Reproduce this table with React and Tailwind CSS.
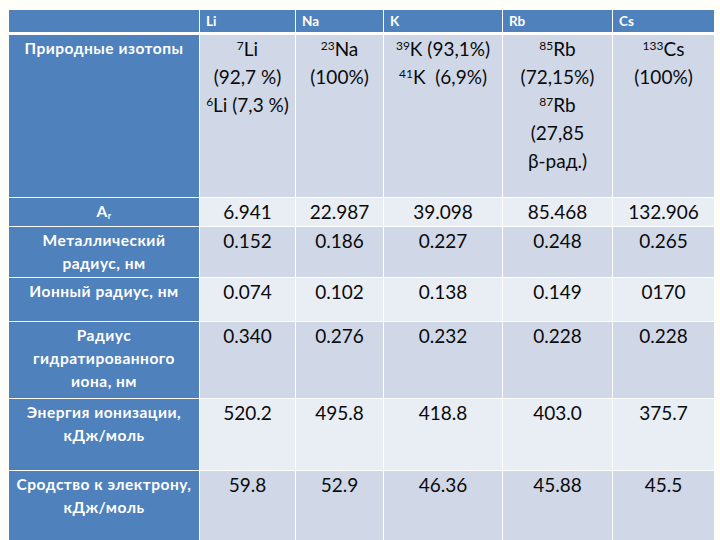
import React from "react";

const font = { fontFamily: "Lato, 'Noto Sans', 'Liberation Sans', sans-serif" };

const head = ["Li", "Na", "K", "Rb", "Cs"];

const rows = [
  {
    label: ["Природные изотопы"],
    dark: true,
    cells: [
      [<><sup className="text-[12px]">7</sup>Li</>, "(92,7 %)", <><sup className="text-[12px]">6</sup>Li (7,3 %)</>],
      [<><sup className="text-[12px]">23</sup>Na</>, "(100%)"],
      [<><sup className="text-[12px]">39</sup>K (93,1%)</>, <><sup className="text-[12px]">41</sup>K&nbsp; (6,9%)</>],
      [<><sup className="text-[12px]">85</sup>Rb</>, "(72,15%)", <><sup className="text-[12px]">87</sup>Rb</>, "(27,85", "β-рад.)"],
      [<><sup className="text-[12px]">133</sup>Cs</>, "(100%)"],
    ],
  },
  {
    label: [<>A<sub className="text-[9px]">r</sub></>],
    dark: false,
    cells: [["6.941"], ["22.987"], ["39.098"], ["85.468"], ["132.906"]],
  },
  {
    label: ["Металлический", "радиус, нм"],
    dark: true,
    cells: [["0.152"], ["0.186"], ["0.227"], ["0.248"], ["0.265"]],
  },
  {
    label: ["Ионный радиус, нм"],
    dark: false,
    cells: [["0.074"], ["0.102"], ["0.138"], ["0.149"], ["0170"]],
  },
  {
    label: ["Радиус", "гидратированного", "иона, нм"],
    dark: true,
    cells: [["0.340"], ["0.276"], ["0.232"], ["0.228"], ["0.228"]],
  },
  {
    label: ["Энергия ионизации,", "кДж/моль"],
    dark: false,
    cells: [["520.2"], ["495.8"], ["418.8"], ["403.0"], ["375.7"]],
  },
  {
    label: ["Сродство к электрону,", "кДж/моль"],
    dark: true,
    cells: [["59.8"], ["52.9"], ["46.36"], ["45.88"], ["45.5"]],
  },
];

export default function App() {
  return (
    <div className="w-[720px] h-[540px] overflow-hidden bg-[#fffef8] pt-[10px] pl-[9px]" style={font}>
      <div className="grid w-[705px] grid-cols-[190px_95px_87px_118px_109px_101px] grid-rows-[24px_162px_28px_50px_43px_76px_71px_80px] gap-px bg-white">
        <div className="bg-[#4f81bd] border-b-2 border-white" />
        {head.map((h) => (
          <div
            key={h}
            className="bg-[#4f81bd] border-b-2 border-white pl-[6px] text-[13.5px] font-bold text-white leading-[22px]"
          >
            {h}
          </div>
        ))}
        {rows.map((r, i) => (
          <React.Fragment key={i}>
            <div className="bg-[#4f81bd] pt-[2px] text-center text-[15.5px] font-bold leading-[23px] tracking-[0.5px] text-white">
              {r.label.map((l, j) => (
                <div key={j}>{l}</div>
              ))}
            </div>
            {r.cells.map((c, k) => (
              <div
                key={k}
                className={`${r.dark ? "bg-[#d0d8e8]" : "bg-[#e9edf4]"} text-center text-[19px] leading-[28px] text-[#0a0a0a]`}
              >
                {c.map((l, j) => (
                  <div key={j}>{l}</div>
                ))}
              </div>
            ))}
          </React.Fragment>
        ))}
      </div>
    </div>
  );
}
